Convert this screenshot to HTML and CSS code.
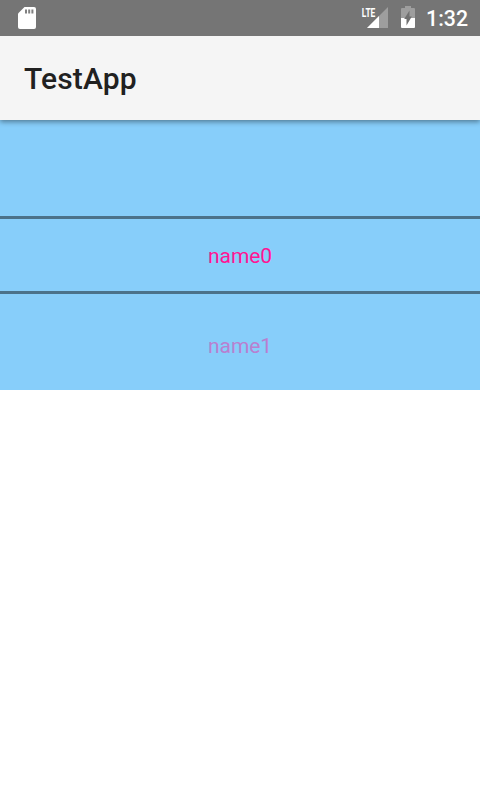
FILE: index.html
```html
<!DOCTYPE html>
<html lang="en">
<head>
<meta charset="utf-8">
<title>TestApp</title>
<link rel="stylesheet" href="styles.css">
</head>
<body>
<div class="status-bar">
  <svg class="sd-icon" width="18" height="22" viewBox="0 0 18 22">
    <path fill="#fff" d="M6.500 0H16a2 2 0 0 1 2 2v18a2 2 0 0 1-2 2H2a2 2 0 0 1-2-2V6.500Z"/>
    <path fill="#808080" d="M7 2.500v4h2v-4ZM10.200 2.500v4h2v-4ZM13.400 2.500v4h2v-4Z"/>
  </svg>
  <svg class="signal-icon" width="27" height="22" viewBox="0 0 27 22">
    <path fill="#9e9e9e" d="M27 1V22H6Z"/>
    <path fill="#757575" d="M0 0H15V12H0Z"/>
    <path fill="#fff" d="M18 10V22H6Z"/>
    <text class="network" x="0.800" y="10.800" textLength="13.500" lengthAdjust="spacingAndGlyphs">LTE</text>
  </svg>
  <svg class="battery-icon" width="14" height="22" viewBox="0 0 14 22">
    <path fill="#9e9e9e" d="M4 0H10V2H13a1 1 0 0 1 1 1V12H0V3a1 1 0 0 1 1-1H4Z"/>
    <path fill="#fff" d="M0 12H14V21a1 1 0 0 1-1 1H1a1 1 0 0 1-1-1Z"/>
    <path fill="#707070" d="M8.500 4.500V10.500H10.800L5.500 19.500V13H3.200Z"/>
  </svg>
  <span class="clock">1:32</span>
</div>
<header class="app-bar">TestApp</header>
<main class="picker">
  <div class="blank"></div>
  <div class="item selected">name0</div>
  <div class="item next">name1</div>
</main>
</body>
</html>
```

FILE: styles.css
```css
body {
  margin: 0;
  background: #fff;
  font-family: Roboto, sans-serif;
}

.status-bar {
  position: relative;
  z-index: 2;
  display: flex;
  box-sizing: border-box;
  height: 36px;
  padding: 0 12px 0 18px;
  background: #757575;
}

.sd-icon {
  margin-top: 7px;
}

.signal-icon {
  margin: 6px 13px 0 auto;
  overflow: visible;
}

.network {
  fill: #fff;
  font: 700 13px Roboto, sans-serif;
}

.battery-icon {
  margin: 6px 11px 0 0;
}

.clock {
  width: 42px;
  color: #fff;
  font-size: 21.3px;
  font-weight: 500;
  line-height: 38px;
  text-align: right;
}

.app-bar {
  position: relative;
  z-index: 1;
  box-sizing: border-box;
  height: 84px;
  padding-left: 24px;
  background: #f5f5f5;
  box-shadow: 0 2px 5px rgba(0, 0, 0, 0.4);
  color: #212121;
  font-size: 30px;
  font-weight: 500;
  letter-spacing: 0.15px;
  line-height: 86px;
}

.picker {
  height: 270px;
  background: #87cefa;
  font-size: 21px;
  letter-spacing: -0.1px;
  text-align: center;
}

.blank {
  height: 96px;
}

.selected {
  height: 72px;
  border-top: 3px solid #4b728a;
  border-bottom: 3px solid #4b728a;
  color: #ff1493;
  line-height: 74px;
}

.next {
  padding-top: 15px;
  color: #b97fd0;
  line-height: 74px;
}
```
